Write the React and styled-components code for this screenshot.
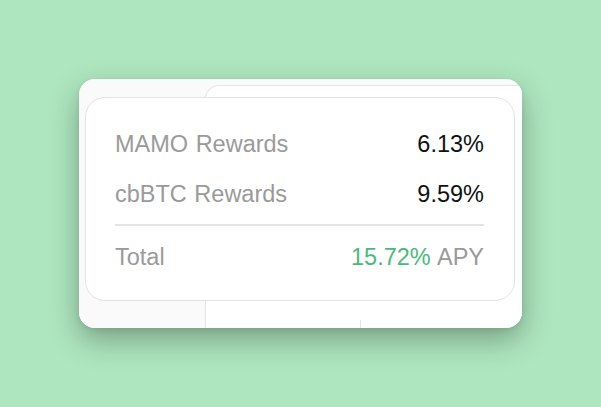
import styled, { createGlobalStyle } from "styled-components";

const GlobalStyle = createGlobalStyle`
  html, body {
    margin: 0;
    padding: 0;
    background: #aee6bf;
  }
  body {
    font-family: "Liberation Sans", Arial, sans-serif;
  }
`;

const rewards = [
  { label: "MAMO Rewards", value: "6.13%" },
  { label: "cbBTC Rewards", value: "9.59%" },
];

const App = () => {
  return (
    <Page>
      <GlobalStyle />
      <Card>
        <SideColumn />
        <TableArea>
          <TablePanel>
            <TableBody />
            <TableFooter>
              <FooterCell $width="154px" />
              <FooterCell $divided />
            </TableFooter>
          </TablePanel>
        </TableArea>

        {/* breakdown popover sitting over the table */}
        <Popover>
          {rewards.map((r, i) => (
            <Row key={r.label} $first={i === 0}>
              <Label>{r.label}</Label>
              <Value>{r.value}</Value>
            </Row>
          ))}
          <Divider />
          <Row>
            <Label>Total</Label>
            <Value>
              <Green>15.72%</Green> <Muted>APY</Muted>
            </Value>
          </Row>
        </Popover>
      </Card>
    </Page>
  );
};

const Page = styled.div`
  width: 100vw;
  height: 100vh;
  display: flex;
  align-items: center;
  justify-content: center;
`;

const Card = styled.div`
  position: relative;
  width: 443px;
  height: 249px;
  display: flex;
  background: #fafafa;
  border-radius: 16px;
  overflow: hidden;
  box-shadow: 0 12px 30px rgba(0, 0, 0, 0.3), 0 2px 6px rgba(0, 0, 0, 0.08);
`;

const SideColumn = styled.div`
  width: 126px;
  flex-shrink: 0;
  background: #fafafa;
`;

const TableArea = styled.div`
  flex: 1;
  display: flex;
  padding-top: 6px;
`;

const TablePanel = styled.div`
  flex: 1;
  display: flex;
  flex-direction: column;
  background: #ffffff;
  border-top: 1px solid #e4e4e4;
  border-left: 1px solid #e4e4e4;
  border-top-left-radius: 14px;
`;

const TableBody = styled.div`
  flex: 1;
`;

const TableFooter = styled.div`
  display: flex;
  height: 8px;
`;

const FooterCell = styled.div`
  width: ${({ $width }) => $width || "auto"};
  flex: ${({ $width }) => ($width ? "none" : 1)};
  border-left: ${({ $divided }) => ($divided ? "1px solid #e4e4e4" : "none")};
`;

const Popover = styled.div`
  position: absolute;
  left: 6px;
  top: 18px;
  width: 430px;
  height: 204px;
  box-sizing: border-box;
  padding: 32px 30px 0 29px;
  background: #ffffff;
  border: 1px solid #e3e3e3;
  border-radius: 20px;
  display: flex;
  flex-direction: column;
`;

const Row = styled.div`
  display: flex;
  justify-content: space-between;
  align-items: center;
  height: 28px;
  line-height: 28px;
  font-size: 23.5px;
  word-spacing: 1px;
  margin-top: ${({ $first }) => ($first ? "0" : "22px")};
`;

const Divider = styled.div`
  height: 2px;
  background: #e4e4e4;
  margin: 16px 0 -5px;
`;

const Label = styled.span`
  color: #9a9a9a;
`;

const Value = styled.span`
  color: #111111;
`;

const Green = styled.span`
  color: #4db87c;
`;

const Muted = styled.span`
  color: #9a9a9a;
`;

export default App;
